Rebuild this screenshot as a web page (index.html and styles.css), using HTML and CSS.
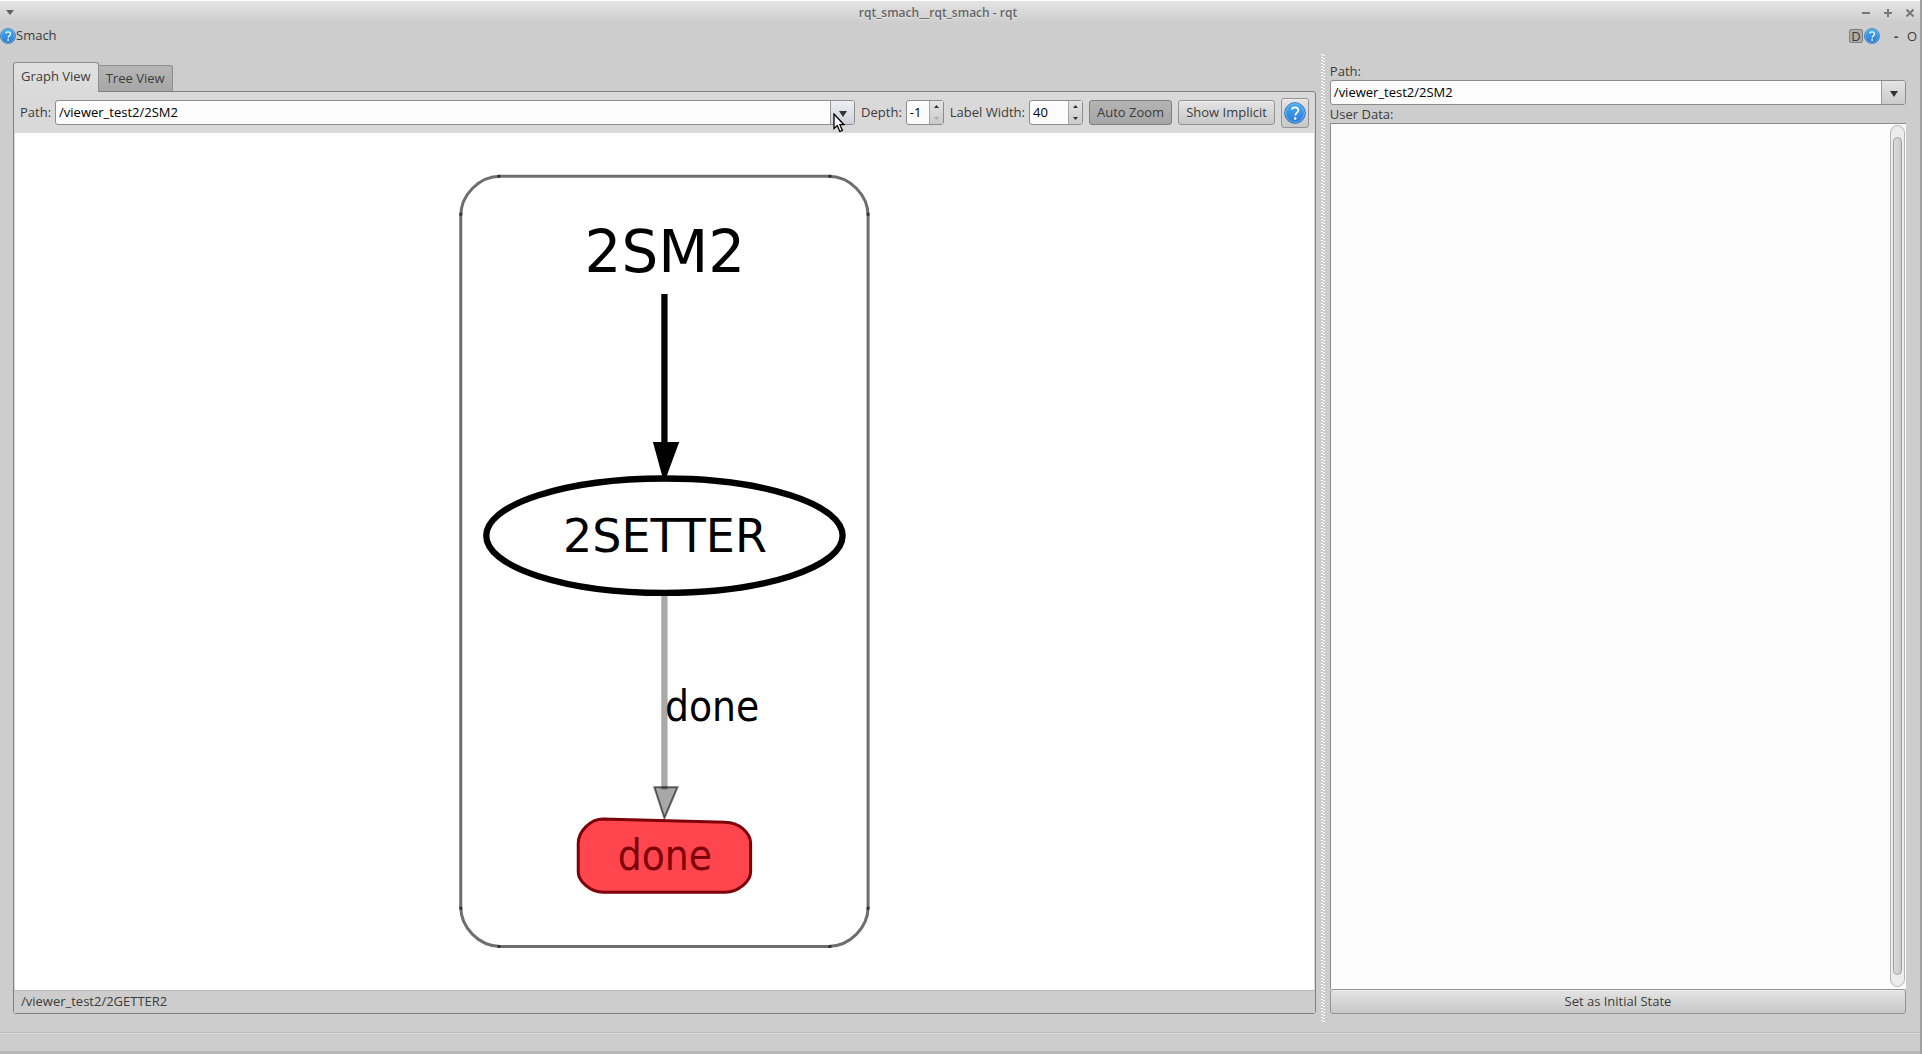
FILE: index.html
```html
<!DOCTYPE html>
<html lang="en">
<head>
<meta charset="utf-8">
<title>rqt_smach__rqt_smach - rqt</title>
<link rel="stylesheet" href="styles.css">
</head>
<body>
<svg class="defs" aria-hidden="true">
  <defs>
    <linearGradient id="blue" x1="0" y1="0" x2="0" y2="1">
      <stop offset="0" stop-color="#46b0f2"/><stop offset="1" stop-color="#2f76d6"/>
    </linearGradient>
    <symbol id="help" viewBox="0 0 24 24">
      <circle cx="12" cy="12" r="11.3" fill="url(#blue)" stroke="#2b6cb4" stroke-width="1"/>
      <circle cx="12" cy="12" r="10.2" fill="none" stroke="#7cc4f4" stroke-width=".8"/>
      <path d="M8.4 8.2C8.8 6.6 10.2 5.8 12 5.8c2.200 0 3.700 1.200 3.700 3.100 0 2.700-3.400 2.900-3.400 5.900" fill="none" stroke="#fff" stroke-width="1.900"/>
      <circle cx="12.200" cy="18" r="1.400" fill="#fff"/>
    </symbol>
  </defs>
</svg>
<div class="window">
  <header class="titlebar">
    <svg class="menu-mark" viewBox="0 0 8 5"><path d="M0 0h8L4 5z" fill="#606060"/></svg>
    <h1 class="title">rqt_smach__rqt_smach - rqt</h1>
    <div class="window-buttons">
      <button class="flat" aria-label="Minimize"><svg viewBox="0 0 8 8"><path d="M0 4h8" stroke="#777" stroke-width="2"/></svg></button>
      <button class="flat" aria-label="Maximize"><svg viewBox="0 0 8 8"><path d="M0 4h8M4 0v8" stroke="#777" stroke-width="2"/></svg></button>
      <button class="flat" aria-label="Close"><svg viewBox="0 0 8 8"><path d="M.5.5l7 7M7.500.5l-7 7" stroke="#777" stroke-width="2"/></svg></button>
    </div>
  </header>

  <div class="dockbar">
    <svg class="help-small"><use href="#help"/></svg>
    <span class="dock-title">Smach</span>
    <button class="flat dock-d">D</button>
    <button class="flat" aria-label="Help"><svg class="help-small"><use href="#help"/></svg></button>
    <button class="flat dock-min">-</button>
    <button class="flat dock-close">O</button>
  </div>

  <main class="content">
    <section class="graph-side">
      <div class="tabs" role="tablist">
        <button class="tab tab-active" role="tab" aria-selected="true">Graph View</button>
        <button class="tab" role="tab" aria-selected="false">Tree View</button>
      </div>
      <div class="pane">
        <div class="toolbar">
          <label for="graph-path">Path:</label>
          <div class="combo combo-hover">
            <select id="graph-path"><option>/viewer_test2/2SM2</option></select>
            <span class="combo-arrow"><svg viewBox="0 0 8 6"><path d="M0 0h8L4 6z" fill="#333"/></svg></span>
            <svg class="cursor" viewBox="0 0 12 20"><path d="M1 1v14.500l3.300-3 2.500 6 2.600-1.100-2.500-5.700H11z" fill="#fff" stroke="#000" stroke-width="1.300"/></svg>
          </div>
          <label for="depth">Depth:</label>
          <div class="spin spin-short">
            <input id="depth" type="number" value="-1">
            <div class="steps">
              <button class="flat" aria-label="Increase depth"><svg viewBox="0 0 5 3"><path d="M0 3h5L2.500 0z" fill="#333"/></svg></button>
              <button class="flat" aria-label="Decrease depth"><svg viewBox="0 0 5 3"><path d="M0 0h5L2.500 3z" fill="#aaa"/></svg></button>
            </div>
          </div>
          <label for="label-width">Label Width:</label>
          <div class="spin">
            <input id="label-width" type="number" value="40">
            <div class="steps">
              <button class="flat" aria-label="Increase width"><svg viewBox="0 0 5 3"><path d="M0 3h5L2.500 0z" fill="#333"/></svg></button>
              <button class="flat" aria-label="Decrease width"><svg viewBox="0 0 5 3"><path d="M0 0h5L2.500 3z" fill="#333"/></svg></button>
            </div>
          </div>
          <button class="button button-pressed" aria-pressed="true">Auto Zoom</button>
          <button class="button">Show Implicit</button>
          <button class="button button-help" aria-label="Help"><svg><use href="#help"/></svg></button>
        </div>
        <div class="graph">
          <svg viewBox="0 0 1299 857" role="img" aria-label="State machine graph">
            <g fill="none" stroke="#000" stroke-opacity=".57" stroke-width="3" stroke-linecap="square">
              <path d="M484 43.200H815"/>
              <path d="M853.200 81.300V775.300"/>
              <path d="M815 813.500H484"/>
              <path d="M445.800 775.300V81.300"/>
              <path stroke-linecap="butt" d="M445.800 82.800C445.800 62 464 43.200 485.500 43.200M813.500 43.200C835 43.200 853.200 62 853.200 82.800M853.200 773.800C853.200 794.600 835 813.500 813.500 813.500M485.500 813.500C464 813.500 445.800 794.600 445.800 773.800"/>
            </g>
            <text class="g-title" x="650" y="139">2SM2</text>
            <path d="M649.500 161V310" stroke="#000" stroke-width="6.300"/>
            <path d="M638 309H664.300L651.500 343.700H647.500z"/>
            <ellipse cx="649.500" cy="402.700" rx="178.200" ry="57.200" fill="#fff" stroke="#000" stroke-width="6.300"/>
            <text class="g-node" x="650" y="419">2SETTER</text>
            <path d="M649.500 463V656.500" stroke="#a9a9a9" stroke-width="6.300"/>
            <path d="M639.500 654.300H662.500L649.500 685z" fill="#000" fill-opacity=".34" stroke="#000" stroke-opacity=".58" stroke-width="2"/>
            <path d="M588.300 686L710.300 689.300C724 689.300 735.700 700 735.700 710.300V738.700C735.700 748 724 759.300 710.300 759.300H588.300C575 759.300 563.300 748 563.300 738.700V710.300C563.300 699 575 686 588.300 686z" fill="#ff464e" stroke="#7d0008" stroke-width="3"/>
            <text class="g-edge" x="650" y="588">done</text>
            <text class="g-outcome" x="650" y="737">done</text>
          </svg>
        </div>
        <div class="hover-path">/viewer_test2/2GETTER2</div>
      </div>
    </section>

    <div class="splitter"></div>

    <aside class="data-side">
      <label for="data-path">Path:</label>
      <div class="combo">
        <select id="data-path"><option>/viewer_test2/2SM2</option></select>
        <span class="combo-arrow"><svg viewBox="0 0 8 6"><path d="M0 0h8L4 6z" fill="#333"/></svg></span>
      </div>
      <label for="user-data">User Data:</label>
      <div class="data-box">
        <textarea id="user-data" readonly></textarea>
        <div class="scroll"><div class="thumb"></div></div>
      </div>
      <button class="button">Set as Initial State</button>
    </aside>
  </main>
  <footer class="statusbar"></footer>
</div>
</body>
</html>
```

FILE: styles.css
```css
* { box-sizing: border-box; }

body {
  margin: 0;
  background: #a0a0a0;
  color: #3c3c3c;
  font: 13px/18px "Open Sans", "Noto Sans", sans-serif;
}

button, input, select, textarea { font: inherit; color: inherit; margin: 0; }
svg { display: block; }
.defs { position: absolute; width: 0; height: 0; }

.window {
  display: flex;
  flex-direction: column;
  height: 100vh;
  margin-right: 2px;
  background: #cdcdcd;
}

.flat {
  display: flex;
  align-items: center;
  justify-content: center;
  padding: 0;
  border: 0;
  background: none;
}

/* title bar */
.titlebar {
  display: flex;
  align-items: center;
  height: 22px;
  padding: 2px 6px 0;
  border-top: 1px solid #fff;
  background: linear-gradient(#e4e4e4, #cecece);
}
.menu-mark { width: 8px; height: 5px; }
.title {
  flex: 1;
  margin: 0;
  font-size: 12px;
  font-weight: 600;
  line-height: 18px;
  text-align: center;
  color: #666;
  text-shadow: 0 1px #e6e6e6;
}
.window-buttons { display: flex; gap: 14px; }
.window-buttons svg { width: 8px; height: 8px; }

/* dock header */
.dockbar {
  display: flex;
  align-items: center;
  height: 28px;
  padding-right: 3px;
}
.help-small { width: 16px; height: 16px; }
.dock-title { flex: 1; padding-bottom: 2px; }
.dock-d {
  width: 14px;
  height: 14px;
  margin-right: 1px;
  border: 1px solid #808080;
  border-radius: 2px;
  background: #adadad;
}
.dock-min { width: 27px; padding-left: 5px; font-weight: 700; }
.dock-close { width: 10px; }

/* main columns */
.content {
  display: flex;
  flex: 1;
  min-height: 0;
  padding: 4px 14px 10px 13px;
}
.graph-side {
  display: flex;
  flex: 1;
  flex-direction: column;
  min-width: 0;
  padding: 8px 5px 8px 0;
}
.splitter {
  width: 4px;
  background:
    linear-gradient(#fff, #fff) 0 0 / 2px 1px no-repeat,
    repeating-linear-gradient(#fff 0 1px, transparent 1px 3px) 0 0 / 2px 100% no-repeat,
    repeating-linear-gradient(transparent 0 1px, #fff 1px 2px, transparent 2px 3px) 2px 0 / 2px 100% no-repeat;
}
.data-side {
  display: flex;
  flex-direction: column;
  width: 30.7%;
  padding: 8px 0 8px 5px;
}

/* tabs */
.tabs { display: flex; align-items: flex-end; height: 29px; }
.tab {
  height: 26px;
  padding: 0 7px 2px;
  border: 1px solid #8e8e8e;
  border-left: 0;
  border-bottom: 0;
  border-radius: 0 3px 0 0;
  background: linear-gradient(#b6b6b6, #a6a6a6);
}
.tab-active {
  z-index: 1;
  height: 30px;
  margin-bottom: -1px;
  padding: 0 7px 3px;
  border-left: 1px solid #808080;
  border-radius: 3px 3px 0 0;
  background: linear-gradient(#e2e2e2, #d9d9d9);
}

.pane {
  display: flex;
  flex: 1;
  flex-direction: column;
  min-height: 0;
  padding: 0 1px;
  border: 1px solid #808080;
  border-radius: 0 3px 3px 3px;
  background: #d9d9d9;
}
.toolbar {
  display: flex;
  align-items: center;
  gap: 6px;
  height: 41px;
  padding: 0 5px;
}
.toolbar label { margin-right: -2px; padding-bottom: 1px; }

/* combo boxes */
.combo {
  display: grid;
  flex: 1;
  grid-template-columns: 1fr 24px;
  position: relative;
  height: 25px;
  border: 1px solid #8c8c8c;
  border-radius: 3px;
  background: #fcfcfc;
}
.data-side .combo { flex: none; }
.combo select {
  grid-area: 1 / 1 / 2 / 3;
  appearance: none;
  width: 100%;
  padding: 0 28px 1px 3px;
  border: 0;
  background: none;
  color: #000;
}
.combo-arrow {
  grid-area: 1 / 2;
  display: flex;
  align-items: center;
  justify-content: center;
  padding-top: 3px;
  border-left: 1px solid #999;
  border-radius: 0 2px 2px 0;
  background: linear-gradient(#e4e4e4, #cbcbcb);
  pointer-events: none;
}
.combo-arrow svg { width: 8px; height: 6px; }
.combo-hover .combo-arrow { background: linear-gradient(#eef1f5, #ccd3db); }
.cursor {
  position: absolute;
  top: 12px;
  right: 9px;
  width: 12px;
  height: 20px;
}

/* spin boxes */
.spin {
  display: flex;
  width: 54px;
  height: 25px;
  border: 1px solid #8c8c8c;
  border-radius: 3px;
  background: #fcfcfc;
}
.spin-short { width: 38px; }
.spin input {
  flex: 1;
  min-width: 0;
  appearance: textfield;
  padding: 0 0 1px 3px;
  border: 0;
  background: none;
  color: #000;
}
.spin input::-webkit-inner-spin-button { appearance: none; margin: 0; }
.steps {
  display: flex;
  flex-direction: column;
  width: 14px;
  border-left: 1px solid #a5a5a5;
  background: linear-gradient(#e4e4e4, #cbcbcb);
}
.steps button { flex: 1; }
.steps svg { width: 5px; height: 3px; }

/* push buttons */
.button {
  height: 25px;
  padding: 0 7px 2px;
  border: 1px solid #939393;
  border-radius: 3px;
  background: linear-gradient(#e4e4e4, #c8c8c8);
  box-shadow: inset 0 1px #efefef;
}
.button-pressed {
  border-color: #7f7f7f;
  background: linear-gradient(#b4b4b4, #a6a6a6);
  box-shadow: none;
}
.button-help {
  width: 28px;
  height: 30px;
  padding: 0 2px;
}
.button-help svg { width: 22px; height: 22px; }

/* graph */
.graph {
  flex: 1;
  min-height: 0;
  background: #fff;
}
.graph svg { width: 100%; height: 100%; }
.graph text { font-family: "DejaVu Sans", sans-serif; text-anchor: middle; }
.graph .g-title { font-size: 58px; }
.graph .g-node { font-size: 46px; }
.graph .g-edge, .graph .g-outcome {
  font-family: "DejaVu Sans Condensed", "DejaVu Sans", sans-serif;
  font-size: 42px;
  font-stretch: condensed;
}
.graph .g-edge { text-anchor: start; }
.graph .g-outcome { fill: #7d0008; }

.hover-path {
  height: 23px;
  margin: 0 -1px;
  padding: 1px 7px;
  border-top: 1px solid #b9b9b9;
  background: #cdcdcd;
}

/* user data */
.data-side label { height: 18px; }
.data-box {
  display: flex;
  flex: 1;
  min-height: 0;
  border-top: 1px solid #8c8c8c;
  border-left: 1px solid #8c8c8c;
  background: #fcfcfc;
}
.data-box textarea {
  flex: 1;
  min-width: 0;
  border: 0;
  resize: none;
  background: none;
}
.scroll {
  width: 15px;
  margin: 1px 1px 2px 0;
  padding: 11px 2px;
  border: 1px solid #b4b4b4;
  border-radius: 8px;
  background: #ececec;
}
.thumb {
  height: 100%;
  border: 1px solid #a0a0a0;
  border-radius: 5px;
  background: linear-gradient(90deg, #dcdcdc, #cacaca);
}

.statusbar {
  height: 22px;
  border-top: 1px solid #bcbcbc;
  border-bottom: 3px solid #b8b8b8;
  box-shadow: inset 0 1px #d8d8d8;
}
```
